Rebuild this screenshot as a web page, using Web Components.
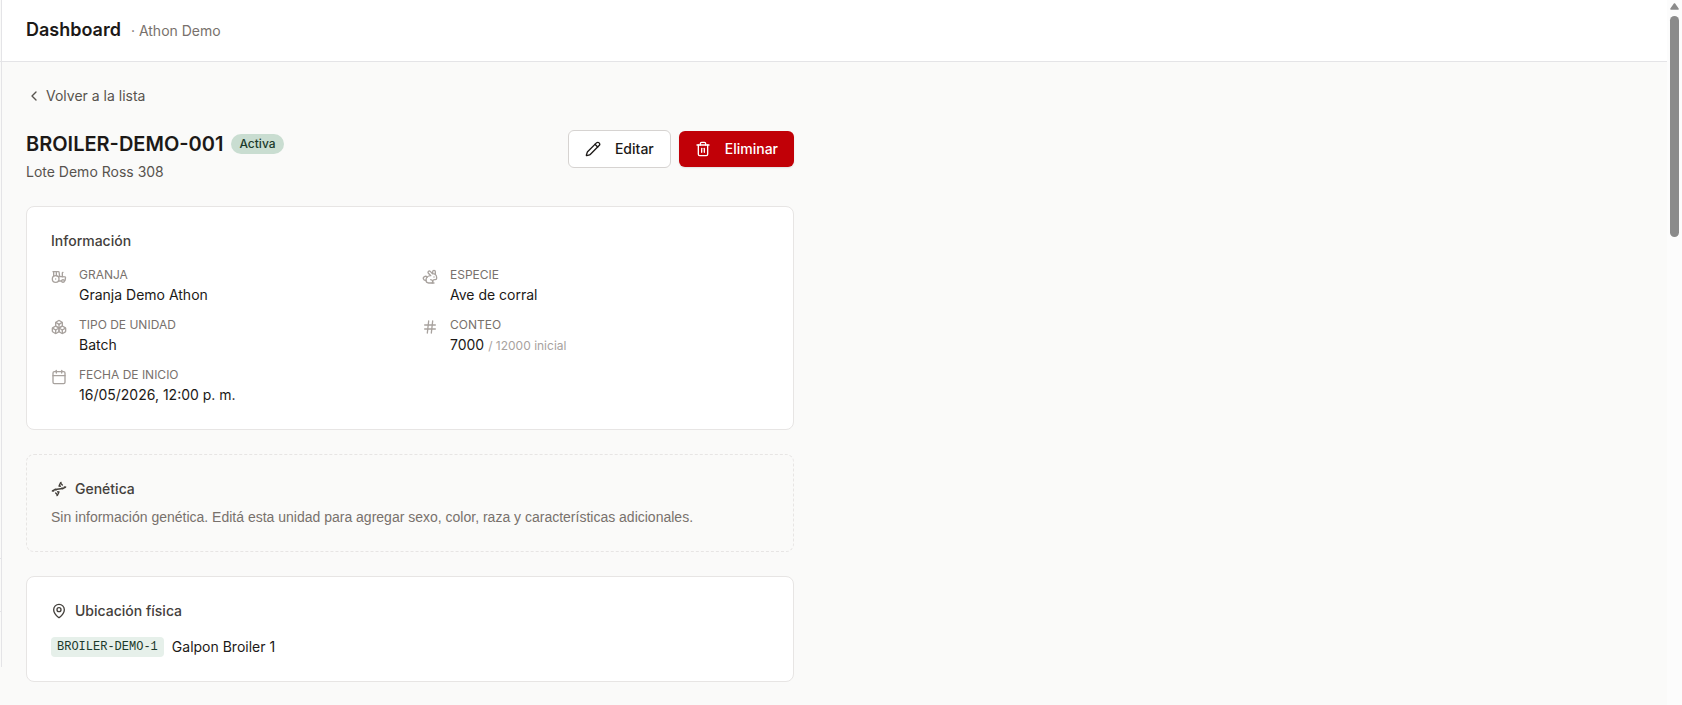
<!DOCTYPE html>
<html lang="es">
<head>
<meta charset="utf-8">
<title>Dashboard · Athon Demo</title>
<style>
  body { margin: 0; background: #fafaf9; color: #1c1917; font: 14px/20px Inter, sans-serif; }
</style>
</head>
<body>
<app-shell>
  <app-header slot="header" heading="Dashboard" org="Athon Demo"></app-header>
  <back-link href="#lista">Volver a la lista</back-link>
  <unit-header code="BROILER-DEMO-001" status="Activa" name="Lote Demo Ross 308">
    <action-button icon="pencil">Editar</action-button>
    <action-button icon="trash" danger>Eliminar</action-button>
  </unit-header>
  <info-card heading="Información">
    <field-grid>
      <info-field icon="tractor" label="Granja">Granja Demo Athon</info-field>
      <info-field icon="rabbit" label="Especie">Ave de corral</info-field>
      <info-field icon="boxes" label="Tipo de unidad">Batch</info-field>
      <info-field icon="hash" label="Conteo" note="/ 12000 inicial">7000</info-field>
      <info-field icon="calendar" label="Fecha de inicio">16/05/2026, 12:00 p. m.</info-field>
    </field-grid>
  </info-card>
  <info-card heading="Genética" icon="dna" empty>Sin información genética. Editá esta unidad para agregar sexo, color, raza y características adicionales.</info-card>
  <info-card heading="Ubicación física" icon="pin">
    <location-row code="BROILER-DEMO-1">Galpon Broiler 1</location-row>
  </info-card>
</app-shell>

<script>
const ICONS = {
  chevron: '<path d="m15 18-6-6 6-6"/>',
  pencil: '<path d="M21.174 6.812a1 1 0 0 0-3.986-3.987L3.842 16.174a2 2 0 0 0-.5.83l-1.321 4.352a.5.5 0 0 0 .623.622l4.353-1.32a2 2 0 0 0 .83-.497z"/><path d="m15 5 4 4"/>',
  trash: '<path d="M3 6h18"/><path d="M19 6v14a2 2 0 0 1-2 2H7a2 2 0 0 1-2-2V6"/><path d="M8 6V4a2 2 0 0 1 2-2h4a2 2 0 0 1 2 2v2"/><path d="M10 11v6"/><path d="M14 11v6"/>',
  tractor: '<path d="m10 11 11 .9a1 1 0 0 1 .8 1.1l-.665 4.158a1 1 0 0 1-.988.842H20"/><path d="M16 18h-5"/><path d="M18 5a1 1 0 0 0-1 1v5.573"/><path d="M3 4h8.129a1 1 0 0 1 .99.863L13 11.246"/><path d="M4 11V4"/><path d="M7 15h.01"/><path d="M8 10.1V4"/><circle cx="18" cy="18" r="2"/><circle cx="7" cy="15" r="5"/>',
  rabbit: '<path d="M13 16a3 3 0 0 1 2.24 5"/><path d="M18 12h.01"/><path d="M18 21h-8a4 4 0 0 1-4-4 7 7 0 0 1 7-7h.2L9.6 6.4a1 1 0 1 1 2.8-2.8L15.8 7h.2c3.3 0 6 2.7 6 6v1a2 2 0 0 1-2 2h-1a3 3 0 0 0-3 3"/><path d="M20 8.54V4a2 2 0 1 0-4 0v3"/><path d="M7.612 12.524a3 3 0 1 0-1.6 4.3"/>',
  boxes: '<path d="M2.97 12.92A2 2 0 0 0 2 14.63v3.24a2 2 0 0 0 .97 1.71l3 1.8a2 2 0 0 0 2.06 0L12 19v-5.5l-5-3-4.03 2.42Z"/><path d="m7 16.5-4.74-2.85"/><path d="m7 16.5 5-3"/><path d="M7 16.5v5.17"/><path d="M12 13.5V19l3.97 2.38a2 2 0 0 0 2.06 0l3-1.8a2 2 0 0 0 .97-1.71v-3.24a2 2 0 0 0-.97-1.71L17 10.5l-5 3Z"/><path d="m17 16.5-5-3"/><path d="m17 16.5 4.74-2.85"/><path d="M17 16.5v5.17"/><path d="M7.97 4.42A2 2 0 0 0 7 6.13v4.37l5 3 5-3V6.13a2 2 0 0 0-.97-1.71l-3-1.8a2 2 0 0 0-2.06 0l-3 1.8Z"/><path d="M12 8 7.26 5.15"/><path d="m12 8 4.74-2.85"/><path d="M12 13.5V8"/>',
  hash: '<path d="M4 9h16"/><path d="M4 15h16"/><path d="M10 3 8 21"/><path d="m16 3-2 18"/>',
  calendar: '<path d="M8 2v4"/><path d="M16 2v4"/><rect width="18" height="18" x="3" y="4" rx="2"/><path d="M3 10h18"/>',
  dna: '<path d="m10 16 1.5 1.5"/><path d="m14 8-1.5-1.5"/><path d="M15 2c-1.798 1.998-2.518 3.995-2.807 5.993"/><path d="m16.5 10.5 1 1"/><path d="m17 6-2.891-2.891"/><path d="M2 15c6.667-6 13.333 0 20-6"/><path d="m20 9 .891.891"/><path d="M3.109 14.109 4 15"/><path d="m6.5 12.5 1 1"/><path d="m7 18 2.891 2.891"/><path d="M9 22c1.798-1.998 2.518-3.995 2.807-5.993"/>',
  pin: '<path d="M20 10c0 4.993-5.539 10.193-7.399 11.799a1 1 0 0 1-1.202 0C9.539 20.193 4 14.993 4 10a8 8 0 0 1 16 0"/><circle cx="12" cy="10" r="3"/>'
};

class Base extends HTMLElement {
  constructor() { super(); this.attachShadow({ mode: 'open' }); }
  connectedCallback() {
    this.shadowRoot.innerHTML = '<style>*{box-sizing:border-box}:host{box-sizing:border-box}h1,h2,p,dl,dt,dd{margin:0}' + this.css() + '</style>' + this.html();
  }
  attr(name) { return this.getAttribute(name) || ''; }
}

customElements.define('ui-icon', class extends Base {
  css() { return ':host{display:block;flex:none;width:16px;height:16px}svg{display:block;width:100%;height:100%}'; }
  html() { return `<svg viewBox="0 0 24 24" fill="none" stroke="currentColor" stroke-width="2" stroke-linecap="round" stroke-linejoin="round" aria-hidden="true">${ICONS[this.attr('name')]}</svg>`; }
});

customElements.define('side-edge', class extends Base {
  css() { return `:host{display:flex;flex-direction:column;gap:52px;width:2px;height:calc(100vh - 38px);padding:61px 0 55px;border-right:1px solid #e4e4e7}
    i{height:1px;background:#e4e4e7}
    i:first-of-type{margin-bottom:auto}`; }
  html() { return '<i></i><i></i><i></i>'; }
});

customElements.define('scroll-rail', class extends Base {
  css() { return `:host{display:flex;flex-direction:column;align-items:center;gap:6px;width:15px;height:100vh;padding-top:3px;background:#fcfcfc}
    svg{display:block;width:9px;height:7px}
    i{width:9px;height:calc(100vh * 221 / 705);border-radius:5px;background:#8b8b8b}`; }
  html() { return '<svg viewBox="0 0 9 7" aria-hidden="true"><path d="M4.5 1 8 6H1z" fill="#8b8b8b" stroke="#8b8b8b" stroke-width="1.6" stroke-linejoin="round"/></svg><i></i>'; }
});

customElements.define('app-shell', class extends Base {
  css() { return `:host{display:grid;grid-template-columns:auto minmax(0,1fr) auto;height:100vh;overflow:hidden}
    .content{display:flex;flex-direction:column;gap:24px;max-width:816px;padding:24px}`; }
  html() { return '<side-edge></side-edge><div><slot name="header"></slot><main class="content"><slot></slot></main></div><scroll-rail></scroll-rail>'; }
});

customElements.define('app-header', class extends Base {
  css() { return `:host{display:block}
    header{display:flex;align-items:baseline;gap:10px;padding:16px 24px 17px;background:#fff;border-bottom:1px solid #e4e4e7}
    h1{font-size:18px;line-height:28px;font-weight:600}
    span{color:#78716c}`; }
  html() { return `<header><h1>${this.attr('heading')}</h1><span>· ${this.attr('org')}</span></header>`; }
});

customElements.define('back-link', class extends Base {
  css() { return `:host{display:block}
    a{display:inline-flex;align-items:center;gap:4px;height:20px;color:#57534e;text-decoration:none;vertical-align:top}`; }
  html() { return `<a href="${this.attr('href')}"><ui-icon name="chevron"></ui-icon><slot></slot></a>`; }
});

customElements.define('unit-header', class extends Base {
  css() { return `:host{display:flex;align-items:flex-start;justify-content:space-between;gap:16px}
    .title{display:flex;align-items:center;gap:8px}
    h1{font-size:20px;line-height:28px;font-weight:600}
    .badge{padding:2px 8px;border-radius:10px;background:#c9ddd1;color:#1b3a2b;font-size:12px;line-height:16px;font-weight:500}
    p{margin-top:4px;color:#57534e}
    .actions{display:flex;align-items:center;gap:8px}`; }
  html() { return `<div><div class="title"><h1>${this.attr('code')}</h1><span class="badge">${this.attr('status')}</span></div><p>${this.attr('name')}</p></div><div class="actions"><slot></slot></div>`; }
});

customElements.define('action-button', class extends Base {
  css() { return `:host{display:block}
    button{display:flex;align-items:center;gap:14px;padding:8px 16px;border:1px solid #d6d3d1;border-radius:6px;background:#fff;color:#1c1917;font:500 14px/20px Inter,sans-serif}
    :host([danger]) button{border:0;background:#c10007;color:#fff;box-shadow:0 1px 2px #0000001a}`; }
  html() { return `<button type="button"><ui-icon name="${this.attr('icon')}"></ui-icon><slot></slot></button>`; }
});

customElements.define('info-card', class extends Base {
  css() { return `:host{display:block;padding:24px;border:1px solid #e7e5e4;border-radius:8px;background:#fff}
    :host([empty]){border-style:dashed;background:none;color:#78716c;font-family:"Liberation Sans",sans-serif}
    h2{display:flex;align-items:center;gap:8px;margin-bottom:16px;font:500 14px/20px Inter,sans-serif;color:#44403c}
    :host([empty]) h2{margin-bottom:8px}`; }
  html() {
    const icon = this.attr('icon');
    return `<h2>${icon ? `<ui-icon name="${icon}"></ui-icon>` : ''}${this.attr('heading')}</h2><slot></slot>`;
  }
});

customElements.define('field-grid', class extends Base {
  css() { return ':host{display:grid;grid-template-columns:1fr 1fr;gap:12px 24px}'; }
  html() { return '<slot></slot>'; }
});

customElements.define('info-field', class extends Base {
  css() { return `:host{display:flex;gap:12px}
    ui-icon{margin-top:2px;color:#a8a29e}
    dl{display:grid;gap:2px}
    dt{font-size:12px;line-height:16px;text-transform:uppercase;color:#78716c}
    small{font-size:12px;line-height:12px;color:#a8a29e}`; }
  html() {
    const note = this.attr('note');
    return `<ui-icon name="${this.attr('icon')}"></ui-icon><dl><dt>${this.attr('label')}</dt><dd><slot></slot>${note ? ` <small>${note}</small>` : ''}</dd></dl>`;
  }
});

customElements.define('location-row', class extends Base {
  css() { return `:host{display:flex;align-items:center;gap:8px}
    code{padding:2px 6px;border-radius:4px;background:#e6f0ea;color:#1b3a2b;font:12px/16px "Liberation Mono",monospace}`; }
  html() { return `<code>${this.attr('code')}</code><slot></slot>`; }
});
</script>
</body>
</html>
